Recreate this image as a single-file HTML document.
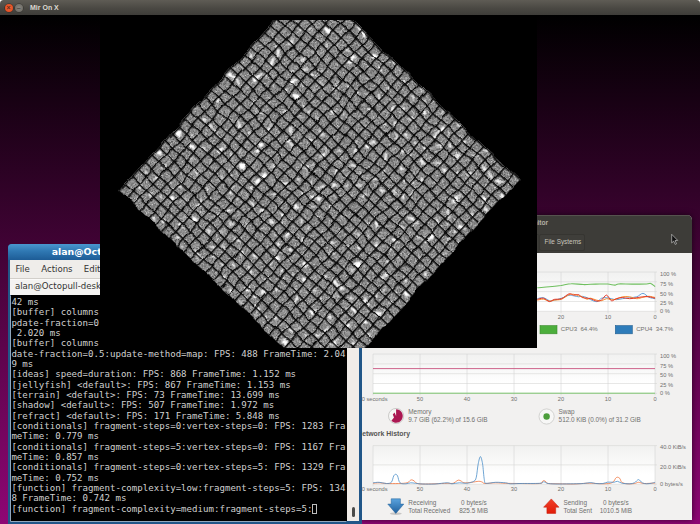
<!DOCTYPE html>
<html><head><meta charset="utf-8"><title>Mir On X</title>
<style>
*{box-sizing:border-box;margin:0;padding:0}
html,body{width:700px;height:524px;overflow:hidden}
html{background:#fff}
body{position:relative;font-family:"DejaVu Sans","Liberation Sans",sans-serif;background:#fff}
.abs{position:absolute}
#desk{left:0;top:15px;width:700px;height:509px;background:linear-gradient(#000 0%,#8e0674 100%)}
#tbar{left:0;top:0;width:700px;height:15px;background:linear-gradient(#5f5c55,#4a4843 55%,#3e3d39);border-radius:3.5px 3.5px 0 0}
#tbar span{position:absolute;left:30px;top:3.2px;font-family:"Liberation Sans",sans-serif;font-size:7px;font-weight:bold;color:#dcd9d1;line-height:9px}
.wb{position:absolute;top:3.7px;width:8px;height:8px;border-radius:50%;font-style:normal;font-size:7px;line-height:7.6px;text-align:center;color:#5a2a1a;font-weight:bold;font-family:"Liberation Sans",sans-serif}
#mir{left:99.5px;top:15px;width:437.5px;height:333px;background:#000;overflow:hidden}
#term{left:8px;top:244px;width:353.9px;height:280px;background:#215688;border-radius:4px 4px 0 0}
#ttitle{left:0;top:0;width:353.9px;height:16px;background:linear-gradient(#4a97cf,#2f78b3 45%,#1d5c96);border-radius:4px 4px 0 0;color:#fff;font-weight:bold;font-size:9.4px;line-height:16px}
#tmenu{left:2.2px;top:16px;width:349.6px;height:17.5px;background:#efedea;font-size:8.6px;color:#333;line-height:19.3px}
#ttab{left:2.2px;top:33.5px;width:349.6px;height:17.5px;background:#f4f3f1;font-size:8.6px;color:#333;line-height:17.5px;box-shadow:inset 0 1px 0 #d2cfca,inset 0 2px 0 #fbfaf9}
#tscreen{left:2.5px;top:51px;width:336.8px;height:226.3px;background:#000;color:#d0d0d0;font-family:"DejaVu Sans Mono","Liberation Mono",monospace;font-size:9.1px;line-height:10.33px;white-space:pre;overflow:hidden;padding:2.1px 0 0 .9px;box-shadow:-.7px .7px 0 0 #c2cad3}
#tscroll{left:339.3px;top:51px;width:12.2px;height:226.3px;background:#f0ece8}
#tscroll i{position:absolute;left:4.6px;top:211.800px;width:3.4px;height:10.600px;border-radius:1.7px;background:#4a4a48}
#mon{left:360px;top:215px;width:332px;height:305px;background:#f2f1f0;border-radius:0 5px 0 0;overflow:hidden;box-shadow:0 0 6px rgba(0,0,0,.6)}
</style></head><body>
<div id="desk" class="abs"></div>
<div id="tbar" class="abs"><i class="wb" style="left:4.5px;background:radial-gradient(#f0683c,#dc4418);box-shadow:0 0 0 .6px #3a2a22">×</i><i class="wb" style="left:14.8px;background:radial-gradient(#8a8780,#66645e);box-shadow:0 0 0 .6px #33322e;color:#4a4844">–</i><span>Mir On X</span></div>

<div id="mon" class="abs">
<svg class="abs" style="left:0;top:0" width="332" height="305" viewBox="360 215 332 305" font-family="Liberation Sans, sans-serif" font-size="5.7" fill="#70706e"><defs><linearGradient id="cg" x1="0" y1="0" x2="0" y2="1"><stop offset="0" stop-color="#f1f1f0"/><stop offset=".75" stop-color="#ffffff"/><stop offset="1" stop-color="#ffffff"/></linearGradient><linearGradient id="ab" x1="0" y1="0" x2="0" y2="1"><stop offset="0" stop-color="#5aa3de"/><stop offset="1" stop-color="#1f5f9c"/></linearGradient><linearGradient id="ar" x1="0" y1="0" x2="0" y2="1"><stop offset="0" stop-color="#f0402a"/><stop offset="1" stop-color="#e21c08"/></linearGradient></defs><rect x="360" y="215" width="332" height="38" fill="#3d3c38"/><rect x="360" y="215" width="332" height="1" fill="#55534e"/><text x="548.1" y="225" text-anchor="end" font-size="6.6" font-weight="bold" fill="#b3afa5">System Monitor</text><rect x="500" y="234.500" width="38" height="18" fill="#44433e" stroke="#33322e" stroke-width=".7"/><rect x="539.5" y="234.500" width="45" height="16" rx="1.5" fill="#3f3e3a" stroke="#33322e" stroke-width=".7"/><text x="534" y="244.300" text-anchor="end" font-size="6.4" fill="#c9c5bc">Resources</text><text x="544.6" y="244.300" font-size="6.4" fill="#c9c5bc">File Systems</text><path d="M671.7 234.300v8.600l2-1.800 1.500 3.300 1.300-.6-1.500-3.200 2.700-.2z" fill="#111" stroke="#ddd" stroke-width=".6"/><rect x="373" y="272" width="282" height="39.3" fill="url(#cg)"/><path d="M373 272.0H657M373 281.8H657M373 291.6H657M373 301.5H657M373 311.3H657M373.0 272V313.3M420.0 272V313.3M467.0 272V313.3M514.0 272V313.3M561.0 272V313.3M608.0 272V313.3M655.0 272V313.3" stroke="#d3d3d1" stroke-width=".55" fill="none"/><path d="M537.3 287.8C539.3 287.6 545.5 287.2 549.4 286.8C553.4 286.4 557.4 285.9 561.1 285.4C564.7 284.8 567.6 283.8 571.3 283.7C575.0 283.5 579.4 284.5 583.4 284.6C587.5 284.7 591.5 284.2 595.6 284.1C599.6 284.1 604.5 284.0 607.7 284.1C610.9 284.3 613.2 285.2 615.0 285.1C616.8 285.1 615.8 284.1 618.6 283.9C621.5 283.7 627.3 284.1 632.0 284.1C636.6 284.1 643.4 284.0 646.6 283.9C649.7 283.8 649.3 283.0 650.7 283.4C652.1 283.9 654.3 286.0 655.1 286.6" stroke="#6fbf5f" stroke-width="1.05" fill="none"/><path d="M537.3 298.7C538.3 298.5 541.3 297.4 543.4 297.7C545.4 298.1 547.6 300.2 549.4 300.7C551.2 301.1 552.3 300.6 554.3 300.2C556.3 299.8 559.1 299.0 561.6 298.2C564.0 297.4 566.8 295.7 568.9 295.3C570.9 294.9 572.1 295.6 573.7 295.8C575.3 296.0 577.2 296.7 578.6 296.8C580.0 296.8 580.8 296.1 582.2 296.3C583.6 296.4 585.6 297.2 587.1 297.7C588.5 298.3 589.1 299.0 590.7 299.7C592.3 300.3 595.0 301.9 596.8 301.6C598.6 301.4 600.0 298.9 601.6 298.2C603.3 297.6 604.9 297.7 606.5 297.7C608.1 297.8 609.7 298.4 611.4 298.7C613.0 299.0 614.4 299.7 616.2 299.7C618.0 299.7 620.1 299.0 622.3 298.7C624.5 298.4 627.1 298.1 629.6 297.7C632.0 297.4 634.6 297.5 636.8 296.8C639.1 296.0 640.9 293.3 642.9 293.4C644.9 293.4 647.0 296.4 649.0 297.3C651.0 298.1 654.0 298.5 655.1 298.7" stroke="#5b9bd5" stroke-width=".95" fill="none"/><path d="M537.3 300.2C538.3 300.0 541.3 299.0 543.4 299.2C545.4 299.4 547.6 301.0 549.4 301.1C551.2 301.3 552.3 300.5 554.3 300.2C556.3 299.8 559.1 300.1 561.6 299.2C564.0 298.3 566.8 295.6 568.9 294.8C570.9 294.0 572.1 294.2 573.7 294.3C575.3 294.5 577.2 295.4 578.6 295.8C580.0 296.2 580.8 296.2 582.2 296.8C583.6 297.3 585.6 299.0 587.1 299.2C588.5 299.4 589.1 298.1 590.7 298.2C592.3 298.4 595.0 299.8 596.8 300.2C598.6 300.6 600.0 300.9 601.6 300.7C603.3 300.4 604.9 298.9 606.5 298.7C608.1 298.5 609.7 299.6 611.4 299.7C613.0 299.8 614.4 299.7 616.2 299.2C618.0 298.7 620.1 297.2 622.3 296.8C624.5 296.4 627.1 296.4 629.6 296.8C632.0 297.1 634.6 298.6 636.8 298.7C639.1 298.8 640.9 297.7 642.9 297.3C644.9 296.8 647.0 296.2 649.0 296.3C651.0 296.3 654.0 297.3 655.1 297.5" stroke="#f58a2c" stroke-width=".95" fill="none"/><path d="M537.3 299.4C538.3 299.2 541.3 297.9 543.4 298.2C545.4 298.6 547.6 301.4 549.4 301.6C551.2 301.8 552.3 299.9 554.3 299.4C556.3 299.0 559.1 299.6 561.6 298.7C564.0 297.8 566.8 294.5 568.9 293.9C570.9 293.2 572.1 294.9 573.7 295.1C575.3 295.2 577.2 294.2 578.6 294.6C580.0 295.0 580.8 296.9 582.2 297.5C583.6 298.1 585.6 298.0 587.1 298.2C588.5 298.4 589.1 298.2 590.7 298.7C592.3 299.2 595.0 300.9 596.8 301.1C598.6 301.3 600.0 300.9 601.6 299.9C603.3 298.9 604.9 294.9 606.5 295.1C608.1 295.2 609.7 300.0 611.4 300.7C613.0 301.3 614.4 299.2 616.2 298.7C618.0 298.2 620.1 297.5 622.3 297.5C624.5 297.5 627.1 298.7 629.6 298.7C632.0 298.8 634.6 298.1 636.8 297.7C639.1 297.4 640.9 296.9 642.9 296.8C644.9 296.6 647.0 296.5 649.0 296.8C651.0 297.0 654.0 298.0 655.1 298.2" stroke="#e3301f" stroke-width=".95" fill="none"/><text x="660" y="275.7">100 %</text><text x="660" y="285.7">75 %</text><text x="660" y="295.5">50 %</text><text x="660" y="305.3">25 %</text><text x="660" y="313">0 %</text><text x="387.6" y="318.6" text-anchor="end">60 seconds</text><text x="420" y="318.6" text-anchor="middle">50</text><text x="467" y="318.6" text-anchor="middle">40</text><text x="514" y="318.6" text-anchor="middle">30</text><text x="561" y="318.6" text-anchor="middle">20</text><text x="608" y="318.6" text-anchor="middle">10</text><text x="655" y="318.6" text-anchor="middle">0</text><rect x="540" y="325.600" width="17" height="8.200" fill="#4cae3c" stroke="#3a8a2c" stroke-width=".6"/><text x="560.8" y="331.300" font-size="6.1">CPU3&#160;&#160;64.4%</text><rect x="615.300" y="325.600" width="17" height="8.200" fill="#2e7cba" stroke="#235f90" stroke-width=".6"/><text x="636.200" y="331.300" font-size="6.1">CPU4&#160;&#160;34.7%</text><rect x="373" y="354" width="282" height="39.4" fill="url(#cg)"/><path d="M373 354.0H657M373 363.9H657M373 373.7H657M373 383.5H657M373 393.4H657M373.0 354V395.4M420.0 354V395.4M467.0 354V395.4M514.0 354V395.4M561.0 354V395.4M608.0 354V395.4M655.0 354V395.4" stroke="#d3d3d1" stroke-width=".55" fill="none"/><path d="M373 368.600H655" stroke="#c8547e" stroke-width=".9"/><path d="M373 393.200H655" stroke="#7cc46e" stroke-width="1"/><text x="660" y="357.7">100 %</text><text x="660" y="367.5">75 %</text><text x="660" y="377.3">50 %</text><text x="660" y="387.1">25 %</text><text x="660" y="395">0 %</text><text x="387.6" y="400.7" text-anchor="end">60 seconds</text><text x="420" y="400.7" text-anchor="middle">50</text><text x="467" y="400.7" text-anchor="middle">40</text><text x="514" y="400.7" text-anchor="middle">30</text><text x="561" y="400.7" text-anchor="middle">20</text><text x="608" y="400.7" text-anchor="middle">10</text><text x="655" y="400.7" text-anchor="middle">0</text><circle cx="396.100" cy="416" r="7.600" fill="#f7f7f6" stroke="#b9b9b6" stroke-width=".7"/><path d="M396.100 416L396.100 409.300A6.700 6.700 0 1 1 391.400 420.800L394 417.500L392.800 414.500L394.500 412.500Z" fill="#ab1852"/><text x="408.300" y="413.800" font-size="6.4">Memory</text><text x="408.300" y="422.200" font-size="6.4">9.7 GiB (62.2%) of 15.6 GiB</text><circle cx="546.600" cy="416.500" r="7.600" fill="#f7f7f6" stroke="#c4c4c1" stroke-width=".7"/><circle cx="546.600" cy="416.500" r="3.200" fill="#4c9e3c"/><text x="558.600" y="413.800" font-size="6.4">Swap</text><text x="558.600" y="422.200" font-size="6.4">512.0 KiB (0.0%) of 31.2 GiB</text><text x="410" y="436.400" text-anchor="end" font-size="6.9" font-weight="bold" fill="#555553">Network History</text><rect x="373" y="445.6" width="282" height="38.6" fill="url(#cg)"/><path d="M373 445.6H657M373 464.9H657M373 484.2H657M373.0 445.6V486.2M420.0 445.6V486.2M467.0 445.6V486.2M514.0 445.6V486.2M561.0 445.6V486.2M608.0 445.6V486.2M655.0 445.6V486.2" stroke="#d3d3d1" stroke-width=".55" fill="none"/><path d="M373.1 483.3C374.1 483.2 376.9 482.8 379.1 482.8C381.4 482.8 383.2 483.4 386.4 483.5C389.7 483.6 395.1 483.6 398.6 483.5C402.0 483.4 405.1 483.3 407.1 482.8C409.0 482.3 409.4 480.9 410.2 480.4C411.0 479.9 411.3 479.8 411.9 479.9C412.6 480.0 413.3 480.3 414.1 480.9C414.9 481.4 415.3 482.8 416.8 483.3C418.2 483.8 419.8 483.9 422.9 484.0C425.9 484.1 430.9 483.9 435.0 483.8C439.0 483.6 444.1 483.4 447.1 483.3C450.2 483.2 451.6 483.7 453.2 483.3C454.8 482.9 455.9 481.4 456.8 480.9C457.8 480.3 458.1 480.1 458.8 480.1C459.5 480.2 460.3 480.6 461.2 481.1C462.1 481.5 462.4 482.6 464.1 482.8C465.8 483.0 469.0 482.6 471.4 482.3C473.8 482.1 476.9 481.4 478.7 481.3C480.5 481.3 481.3 481.7 482.3 482.1C483.4 482.4 482.5 483.4 484.8 483.5C487.0 483.6 492.3 482.8 495.7 482.8C499.1 482.8 501.4 483.2 505.4 483.3C509.5 483.4 514.3 483.5 520.0 483.5C525.7 483.6 536.0 483.8 539.7 483.5C543.4 483.2 541.5 482.3 542.1 481.8C542.8 481.3 543.2 480.6 543.8 480.6C544.5 480.6 545.3 481.3 546.0 481.8C546.8 482.3 546.0 483.2 548.2 483.5C550.4 483.8 554.9 483.7 559.1 483.8C563.4 483.8 569.3 484.1 573.7 484.0C578.2 483.9 582.6 483.4 585.9 483.3C589.1 483.2 590.3 483.2 593.1 483.3C596.0 483.4 600.0 483.8 602.9 483.8C605.7 483.8 608.3 483.7 610.1 483.3C612.0 482.9 612.9 482.1 613.8 481.3C614.7 480.5 614.9 479.1 615.5 478.4C616.1 477.7 616.7 477.2 617.4 477.2C618.1 477.2 619.1 477.6 619.8 478.4C620.6 479.3 620.6 481.4 621.8 482.3C623.0 483.2 625.0 483.6 627.1 483.8C629.2 484.0 632.5 483.8 634.4 483.5C636.3 483.3 636.9 482.3 638.5 482.3C640.2 482.3 641.4 483.4 644.1 483.5C646.9 483.6 653.2 483.1 655.1 483.0" stroke="#f0743c" stroke-width=".8" fill="none"/><path d="M373.1 482.8C374.1 482.7 376.9 482.2 379.1 482.3C381.4 482.4 384.4 483.5 386.4 483.5C388.4 483.5 390.1 483.6 391.3 482.3C392.5 481.1 393.0 477.3 393.7 476.0C394.4 474.7 395.0 474.3 395.7 474.3C396.3 474.3 396.9 474.6 397.6 476.0C398.3 477.4 398.6 481.5 400.0 482.8C401.4 484.1 404.1 483.8 405.9 483.8C407.6 483.8 409.1 482.9 410.7 482.8C412.3 482.7 413.5 483.1 415.6 483.3C417.6 483.5 419.6 483.9 422.9 484.0C426.1 484.1 430.9 484.2 435.0 484.0C439.0 483.8 444.3 482.8 447.1 482.8C450.0 482.8 450.0 483.8 452.0 483.8C454.0 483.8 456.8 482.9 459.3 482.8C461.7 482.7 464.1 483.5 466.6 483.3C469.0 483.0 472.2 482.3 473.8 481.3C475.5 480.3 475.5 480.1 476.3 477.2C477.0 474.3 477.5 467.3 478.2 463.9C478.9 460.4 479.7 456.6 480.4 456.6C481.1 456.6 481.9 460.0 482.6 463.9C483.2 467.7 483.7 476.4 484.3 479.6C484.9 482.9 484.1 482.8 486.0 483.3C487.9 483.7 492.5 482.4 495.7 482.3C498.9 482.2 503.0 482.6 505.4 482.8C507.8 483.0 507.8 483.6 510.3 483.8C512.7 483.9 515.1 483.6 520.0 483.5C524.9 483.4 535.7 483.6 539.7 483.3C543.7 483.0 542.4 481.8 543.8 481.8C545.3 481.9 545.7 483.2 548.2 483.5C550.8 483.9 554.9 484.0 559.1 484.0C563.4 484.0 569.7 483.8 573.7 483.8C577.8 483.7 580.6 483.7 583.4 483.5C586.3 483.3 588.7 482.6 590.7 482.6C592.7 482.6 593.5 483.4 595.6 483.5C597.6 483.7 600.8 483.8 602.9 483.5C604.9 483.3 605.9 482.3 607.7 482.1C609.5 481.9 612.2 482.4 613.8 482.3C615.4 482.2 616.0 481.2 617.4 481.3C618.8 481.5 620.3 482.9 622.3 483.3C624.3 483.7 627.5 483.8 629.6 483.8C631.6 483.7 632.9 483.5 634.4 482.8C635.9 482.1 637.3 479.6 638.5 479.6C639.8 479.6 640.9 482.1 642.2 482.8C643.5 483.5 645.0 483.7 646.6 483.8C648.1 483.8 650.0 483.5 651.4 483.3C652.8 483.0 654.5 482.5 655.1 482.3" stroke="#4b8fc9" stroke-width=".8" fill="none"/><text x="660" y="449.3">40.0 KiB/s</text><text x="660" y="468.9">20.0 KiB/s</text><text x="660" y="486.3">0 bytes/s</text><text x="387.6" y="491.4" text-anchor="end">60 seconds</text><text x="420" y="491.4" text-anchor="middle">50</text><text x="467" y="491.4" text-anchor="middle">40</text><text x="514" y="491.4" text-anchor="middle">30</text><text x="561" y="491.4" text-anchor="middle">20</text><text x="608" y="491.4" text-anchor="middle">10</text><text x="655" y="491.4" text-anchor="middle">0</text><ellipse cx="395.800" cy="513.600" rx="6" ry="1.300" fill="#000" opacity=".18"/><path d="M391.200 498.800h9.200v5.300h3.400l-8 9.300l-8-9.300h3.400z" fill="url(#ab)" stroke="#1f5f96" stroke-width=".5"/><path d="M546.900 513.400h8.800v-6.200h3.300l-7.700-8.300l-7.700 8.300h3.300z" fill="url(#ar)" stroke="#c41c08" stroke-width=".5"/><text x="408.300" y="504.700" font-size="6.4">Receiving</text><text x="486.700" y="504.700" font-size="6.4" text-anchor="end">0 bytes/s</text><text x="408.300" y="513" font-size="6.4">Total Received</text><text x="488" y="513" font-size="6.4" text-anchor="end">825.5 MiB</text><text x="563.500" y="504.700" font-size="6.4">Sending</text><text x="628.600" y="504.700" font-size="6.4" text-anchor="end">0 bytes/s</text><text x="563.500" y="513" font-size="6.4">Total Sent</text><text x="632" y="513" font-size="6.4" text-anchor="end">1010.5 MiB</text></svg>
</div>

<div id="term" class="abs">
<div id="ttitle" class="abs"><span class="abs" style="left:43.7px">alan@Octopull-desktop: ~</span></div>
<div id="tmenu" class="abs"><span class="abs" style="left:5.2px">File</span><span class="abs" style="left:31px">Actions</span><span class="abs" style="left:73.6px">Edit</span></div>
<div id="ttab" class="abs"><span class="abs" style="left:4.7px">alan@Octopull-desktop: ~</span></div>
<div id="tscreen" class="abs">42 ms
[buffer] columns
pdate-fraction=0
 2.020 ms
[buffer] columns
date-fraction=0.5:update-method=map: FPS: 488 FrameTime: 2.04
9 ms
[ideas] speed=duration: FPS: 868 FrameTime: 1.152 ms
[jellyfish] &lt;default&gt;: FPS: 867 FrameTime: 1.153 ms
[terrain] &lt;default&gt;: FPS: 73 FrameTime: 13.699 ms
[shadow] &lt;default&gt;: FPS: 507 FrameTime: 1.972 ms
[refract] &lt;default&gt;: FPS: 171 FrameTime: 5.848 ms
[conditionals] fragment-steps=0:vertex-steps=0: FPS: 1283 Fra
meTime: 0.779 ms
[conditionals] fragment-steps=5:vertex-steps=0: FPS: 1167 Fra
meTime: 0.857 ms
[conditionals] fragment-steps=0:vertex-steps=5: FPS: 1329 Fra
meTime: 0.752 ms
[function] fragment-complexity=low:fragment-steps=5: FPS: 134
8 FrameTime: 0.742 ms
[function] fragment-complexity=medium:fragment-steps=5:<span style="display:inline-block;width:5.6px;height:9.4px;margin-left:-.7px;border:.8px solid #bdbdbd;vertical-align:-1.9px"></span></div>
<div id="tscroll" class="abs"><i></i></div>
</div>

<div id="mir" class="abs"><svg class="abs" style="left:.5px;top:5px" width="437" height="328" viewBox="0 5 437 328">
<defs>
<filter id="nz" x="0" y="0" width="100%" height="100%" color-interpolation-filters="sRGB">
<feTurbulence type="fractalNoise" baseFrequency="0.8" numOctaves="2" seed="3" result="n"/>
<feColorMatrix in="n" type="matrix" values="1.0 0 0 0 0.04  1.0 0 0 0 0.04  1.0 0 0 0 0.04  0 0 0 0 1" result="g"/>
<feTurbulence type="fractalNoise" baseFrequency="0.14" numOctaves="1" seed="11" result="n2"/>
<feColorMatrix in="n2" type="matrix" values="0 0 0 0 1  0 0 0 0 1  0 0 0 0 1  8 0 0 0 -5.0" result="s"/>
<feComposite in="s" in2="g" operator="over" result="gs"/>
<feComposite in="gs" in2="SourceGraphic" operator="in"/>
</filter>
<filter id="wob" x="-5%" y="-5%" width="110%" height="110%" color-interpolation-filters="sRGB">
<feTurbulence type="fractalNoise" baseFrequency="0.045" numOctaves="2" seed="5" result="t"/>
<feDisplacementMap in="SourceGraphic" in2="t" scale="6" xChannelSelector="R" yChannelSelector="G" result="d"/>
<feGaussianBlur in="d" stdDeviation="0.4"/>
</filter>
<pattern id="grid" x="-143.900" y="-141.900" width="9.924" height="9.786" patternUnits="userSpaceOnUse">
<path d="M0 0H9.924M0 0V9.786" stroke="#000" stroke-width="3.0" stroke-opacity=".97"/>
</pattern>
</defs>
<g filter="url(#wob)">
<g transform="matrix(0.7242 0.6896 -0.6777 0.7353 219.16 169.97)">
<rect x="-143.900" y="-141.900" width="287.800" height="283.800" fill="#777" filter="url(#nz)"/>
<rect x="-143.900" y="-141.900" width="287.800" height="283.800" fill="url(#grid)"/>
</g>
</g>
</svg></div>
</body></html>
